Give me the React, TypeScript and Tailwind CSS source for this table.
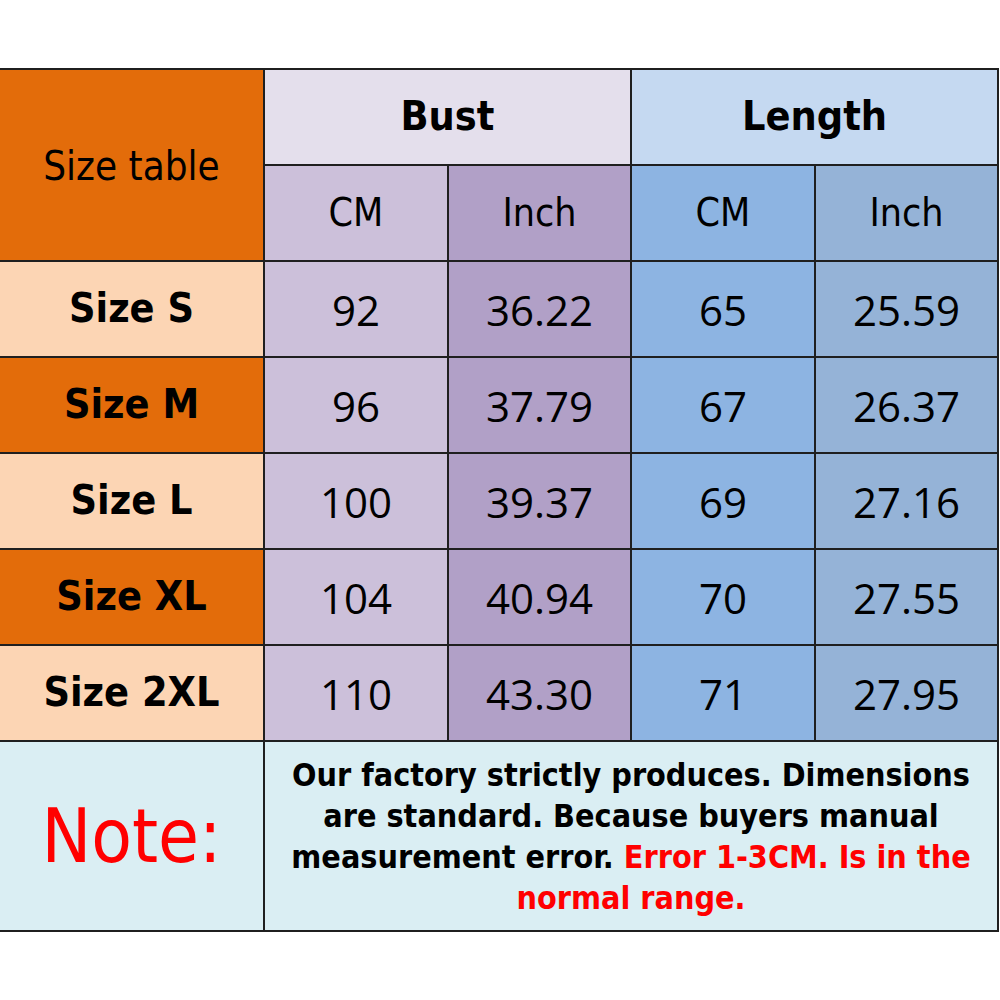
import React from "react";

const rows = [
  { size: "Size S", alt: false, v: ["92", "36.22", "65", "25.59"] },
  { size: "Size M", alt: true, v: ["96", "37.79", "67", "26.37"] },
  { size: "Size L", alt: false, v: ["100", "39.37", "69", "27.16"] },
  { size: "Size XL", alt: true, v: ["104", "40.94", "70", "27.55"] },
  { size: "Size 2XL", alt: false, v: ["110", "43.30", "71", "27.95"] },
];

const dataBg = ["bg-[#ccc0da]", "bg-[#b1a0c7]", "bg-[#8db4e2]", "bg-[#95b3d7]"];

export default function App() {
  return (
    <div className="w-[1000px] h-[1000px] bg-white pt-[68px] font-['DejaVu_Sans_Condensed','DejaVu_Sans',sans-serif]">
      <div className="w-[999px] grid grid-cols-[263px_182px_181px_182px_181px] grid-rows-[94px_94px_94px_94px_94px_94px_94px_188px] gap-[2px] bg-[#1f1f1f] pt-[2px] pr-[2px] pb-[2px]">
        <div className="row-span-2 bg-[#e36c0a] flex items-center justify-center text-[40px] text-black pt-[2px]">
          Size table
        </div>
        <div className="col-span-2 bg-[#e4dfec] flex items-center justify-center text-[41px] font-bold text-black">
          Bust
        </div>
        <div className="col-span-2 bg-[#c5d9f1] flex items-center justify-center text-[41px] font-bold text-black">
          Length
        </div>
        {["CM", "Inch", "CM", "Inch"].map((t, i) => (
          <div key={i} className={`${dataBg[i]} flex items-center justify-center text-[39px] text-black`}>
            {t}
          </div>
        ))}
        {rows.map((r) => (
          <React.Fragment key={r.size}>
            <div
              className={`${r.alt ? "bg-[#e36c0a]" : "bg-[#fcd5b4]"} flex items-center justify-center text-[41px] font-bold text-black`}
            >
              {r.size}
            </div>
            {r.v.map((t, i) => (
              <div
                key={i}
                className={`${dataBg[i]} flex items-center justify-center text-[42px] text-black font-['Open_Sans','Noto_Sans',sans-serif]`}
              >
                {t}
              </div>
            ))}
          </React.Fragment>
        ))}
        <div className="bg-[#daeef3] flex items-center justify-center text-[74px] text-[#ff0000]">
          Note:
        </div>
        <div className="col-span-4 bg-[#daeef3] flex items-start justify-center pt-[13px] text-center text-[32px] leading-[41px] font-bold text-black">
          <p>
            Our factory strictly produces. Dimensions
            <br />
            are standard. Because buyers manual
            <br />
            measurement error. <span className="text-[#ff0000]">Error 1-3CM. Is in the</span>
            <br />
            <span className="text-[#ff0000]">normal range.</span>
          </p>
        </div>
      </div>
    </div>
  );
}
